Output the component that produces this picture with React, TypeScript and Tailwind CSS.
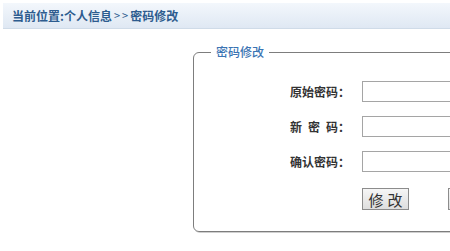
import React from 'react'

const fields = [
  { label: '原始密码：', name: 'oldPwd' },
  { label: '新密码：', name: 'newPwd', spread: true },
  { label: '确认密码：', name: 'confirmPwd' },
]

export default function App() {
  return (
    <div className="w-[450px] h-[251px] overflow-hidden bg-white font-['Noto_Sans_CJK_SC','Liberation_Sans',sans-serif] text-[12px]">
      {/* breadcrumb */}
      <div className="mt-[3px] ml-[3px] h-[26px] flex items-center pl-[9px] bg-gradient-to-b from-[#f3f7fc] to-[#dfe8f3] border-b border-[#cfdbe8]">
        <span className="font-bold text-[#2d5c8f] leading-none flex items-center">
          当前位置:个人信息
          <span className="font-normal text-[11px] ml-[2px] tracking-[2px]">&gt;&gt;</span>
          密码修改
        </span>
      </div>

      <fieldset className="mt-[16px] ml-[193px] w-[320px] h-[187px] border border-[#7d7d7d] rounded-[6px] shadow-[1px_1px_0_#cfcfcf]">
        <legend className="ml-[17px] px-[5px] text-[12px] leading-[14px] text-[#3a74b3] font-medium">
          密码修改
        </legend>

        <div className="pt-[22px] pl-[96px] flex flex-col gap-[14px]">
          {fields.map((f) => (
            <div key={f.name} className="flex items-center h-[21px]">
              {f.spread ? (
                <span className="w-[60px] flex justify-between font-bold text-[#333]">
                  <span>新</span>
                  <span>密</span>
                  <span>码：</span>
                </span>
              ) : (
                <span className="w-[60px] font-bold text-[#333]">{f.label}</span>
              )}
              <input
                type="password"
                name={f.name}
                className="ml-[12px] w-[160px] h-[21px] border border-[#a5a5a5] bg-white outline-none"
              />
            </div>
          ))}

          <div className="flex items-center mt-[2px] pl-[72px] gap-[39px]">
            <button className="w-[47px] h-[22px] border border-[#8c8c8c] bg-gradient-to-b from-[#f6f6f6] to-[#dedede] text-[15px] leading-none text-[#333] tracking-[4px] pl-[4px]">
              修改
            </button>
            <button
              aria-label="返回"
              className="w-[47px] h-[22px] border border-[#8c8c8c] bg-gradient-to-b from-[#f6f6f6] to-[#dedede]"
            />
          </div>
        </div>
      </fieldset>
    </div>
  )
}
